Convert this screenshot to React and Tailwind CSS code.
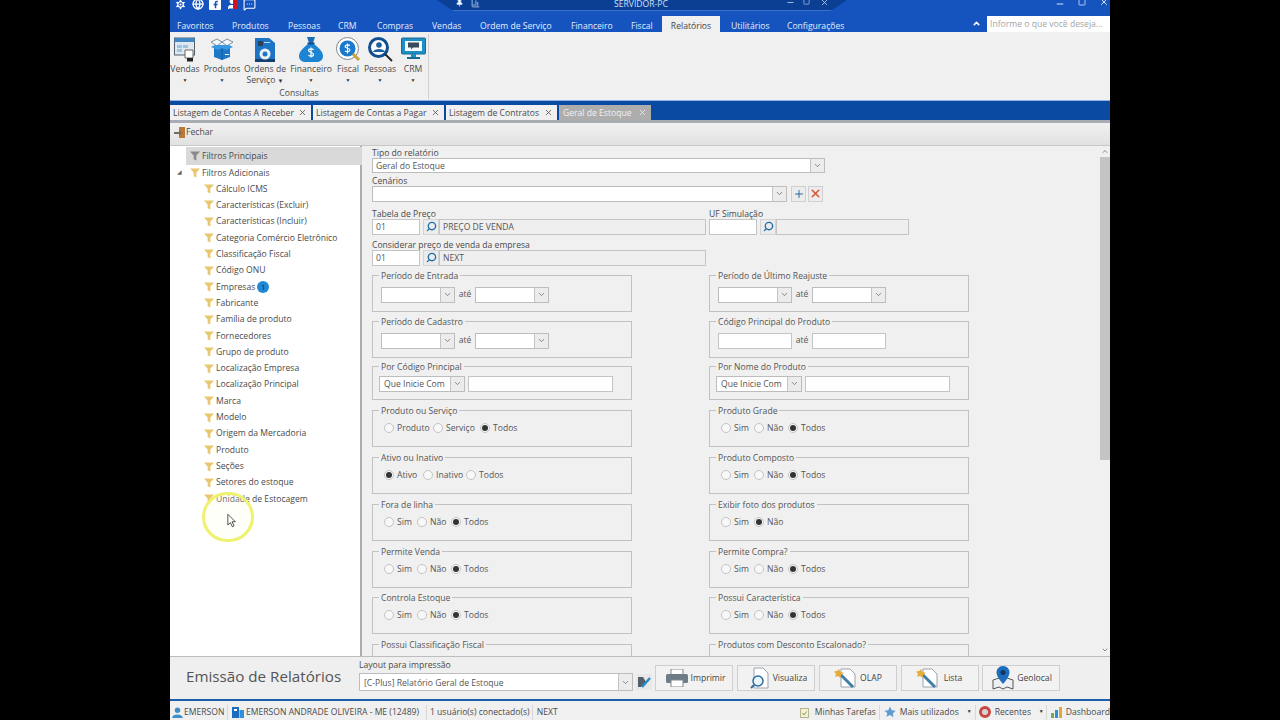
import React from 'react';
import { ChevronDown, ChevronUp, Search, Plus, X, Minus, Square, Settings, Facebook, MessageSquareMore, Pin, BarChart3, Globe, User } from 'lucide-react';

const menu = [
  { label: 'Favoritos', cls: 'w-[55px]' },
  { label: 'Produtos', cls: 'w-[56px]' },
  { label: 'Pessoas', cls: 'w-[50px]' },
  { label: 'CRM', cls: 'w-[39px]' },
  { label: 'Compras', cls: 'w-[55px]' },
  { label: 'Vendas', cls: 'w-[48px]' },
  { label: 'Ordem de Serviço', cls: 'w-[91px]' },
  { label: 'Financeiro', cls: 'w-[60px]' },
  { label: 'Fiscal', cls: 'w-[31px]' },
];

const tree = [
  'Cálculo ICMS', 'Características (Excluir)', 'Características (Incluir)', 'Categoria Comércio Eletrônico',
  'Classificação Fiscal', 'Código ONU', 'Empresas', 'Fabricante', 'Família de produto', 'Fornecedores',
  'Grupo de produto', 'Localização Empresa', 'Localização Principal', 'Marca', 'Modelo',
  'Origem da Mercadoria', 'Produto', 'Seções', 'Setores do estoque', 'Unidade de Estocagem',
];

const openTabs = [
  { label: 'Listagem de Contas A Receber', cls: 'w-[141px]' },
  { label: 'Listagem de Contas a Pagar', cls: 'w-[131px]' },
  { label: 'Listagem de Contratos', cls: 'w-[111px]' },
];

const Funnel = ({ color = '#e8c76f' }) => (
  <svg width="10" height="10" viewBox="0 0 11 11" className="shrink-0">
    <path d="M0 0.5h11L7 5v5.500L4 9V5z" fill={color} />
  </svg>
);

const Chevron = () => (
  <span className="w-[14px] h-full shrink-0 flex items-center justify-center bg-[#ececec] border-l border-[#c4c4c4]">
    <ChevronDown size={9} className="text-[#666]" />
  </span>
);

const Combo = ({ cls, text = '' }) => (
  <div className={`${cls} h-[16px] flex items-center bg-white border border-[#bdbdbd] pl-[4px] justify-between text-[#555]`}>
    <span className="mt-[2px]">{text}</span>
    <Chevron />
  </div>
);

const Box = ({ cls, text = '', muted = false }) => (
  <div className={`${cls} h-[16px] flex items-center border border-[#c4c4c4] pl-[3px] text-[#555] ${muted ? 'bg-[#efefef]' : 'bg-white'}`}>
    <span className="mt-[2px]">{text}</span>
  </div>
);

const SearchBtn = () => (
  <span className="w-[16px] h-[16px] shrink-0 flex items-center justify-center bg-[#ececec] border border-[#d4d4d4]">
    <Search size={11} strokeWidth={3} className="text-[#1f6fa8] -scale-x-100" />
  </span>
);

const Group = ({ label, cls, children }) => (
  <fieldset className={`${cls} border border-[#c2c2c2] pl-[8px] min-w-0`}>
    <legend className="-ml-[2px] px-[2px] h-[12px] leading-[12px] text-[#555]">{label}</legend>
    {children}
  </fieldset>
);

const DateRange = () => (
  <div className="flex items-center pt-[5px]">
    <Combo cls="w-[74px]" />
    <span className="w-[20px] text-center text-[#555]">até</span>
    <Combo cls="w-[74px]" />
  </div>
);

const CodeRange = () => (
  <div className="flex items-center pt-[5px]">
    <Box cls="w-[74px]" />
    <span className="w-[20px] text-center text-[#555]">até</span>
    <Box cls="w-[74px]" />
  </div>
);

const Filter = () => (
  <div className="flex items-center gap-[3px] pt-[3px] -ml-[2px]">
    <Combo cls="w-[86px]" text="Que Inicie Com" />
    <Box cls="w-[145px]" />
  </div>
);

const Radios = ({ items, sel }) => (
  <div className="flex items-center pt-[4px] pl-[3px] h-[18px]">
    {items.map(([label, cls], i) => (
      <div key={label} className={`${cls} flex items-center gap-[3px] text-[#555]`}>
        <span className="w-[10px] h-[10px] rounded-full border border-[#c4c4c4] bg-[#f8f8f8] flex items-center justify-center shrink-0">
          {i === sel && <span className="w-[6px] h-[6px] rounded-full bg-[#333]" />}
        </span>
        <span className="mt-[2px]">{label}</span>
      </div>
    ))}
  </div>
);

const simNaoTodos = [['Sim', 'w-[33px]'], ['Não', 'w-[34px]'], ['Todos', 'w-[40px]']];

const RibbonItem = ({ cls, label, second, children }) => (
  <div className={`${cls} flex flex-col items-center`}>
    <div className="h-[27px] flex items-center justify-center">{children}</div>
    <span className="mt-[1.500px] whitespace-nowrap leading-[11px]">{label}</span>
    {second ? (
      <span className="whitespace-nowrap leading-[11px]">{second} <span className="text-[6px] text-[#333]">▼</span></span>
    ) : (
      <span className="text-[5px] leading-[11px] text-[#333]">▼</span>
    )}
  </div>
);

const ActionBtn = ({ label, cls = '', children }) => (
  <div className={`${cls} w-[78px] h-[26px] flex items-center bg-[#f2f2f2] border border-[#cfcfcf] text-[#444]`}>
    {children}
    <span className="flex-1 text-center">{label}</span>
  </div>
);

const Wand = () => (
  <svg width="24" height="22" viewBox="0 0 24 22" className="ml-[14px] shrink-0">
    <path d="M7 2h9l5 5v13H7z" fill="#fff" stroke="#9aa3ad" />
    <path d="M6 7l13 13" stroke="#3f7fa8" strokeWidth="3" />
    <path d="M5 2l1.500 3L10 6 7 8l-.5 3-2.500-2-3 1 1-3-2-2.500 3-.5z" fill="#e6ad3c" />
  </svg>
);

export default function App() {
  return (
    <div className="w-full h-screen bg-black flex justify-center overflow-hidden font-['Open_Sans',sans-serif] text-[8.6px]">
      <div className="relative w-[940px] h-[720px] flex flex-col bg-[#f0f0f0] text-[#4a4a4a] overflow-hidden">
        {/* Title bar */}
        <div className="h-[16px] bg-[#1553bf] flex items-start text-white relative">
          <div className="w-[96px] flex items-center gap-[5px] pl-[4px] -mt-[3px] h-[14px]">
            <Settings size={13} fill="white" stroke="#1553bf" />
            <Globe size={12} strokeWidth={2.5} />
            <span className="w-[12px] h-[12px] bg-white rounded-[1px] flex items-center justify-center"><Facebook size={9} fill="#1553bf" stroke="none" /></span>
            <span className="relative w-[12px] h-[12px]">
              <User size={12} fill="white" />
              <span className="absolute right-0 top-[2px] w-[5px] h-[9px] bg-[#d0141f]" />
            </span>
            <MessageSquareMore size={13} />
          </div>
          {/* servidor caption */}
          <div className="ml-[171px] w-[410px] h-[11px] bg-[#0b3f94] border-b border-[#3b72c8] [clip-path:polygon(0_0,100%_0,96%_100%,4%_100%)] flex items-start leading-[9px] text-[#cfe0f8]">
            <Pin size={9} fill="white" className="ml-[18px] -mt-[2px]" />
            <BarChart3 size={9} className="ml-[7px] -mt-[1px]" />
            <span className="ml-[134px] w-[53px] whitespace-nowrap">SERVIDOR-PC</span>
            <Minus size={9} className="ml-[119px] -mt-[2px]" />
            <Square size={7} className="ml-[8px] -mt-[2px]" />
            <X size={9} className="ml-[10px] -mt-[2px]" />
          </div>
          <div className="absolute right-[1px] top-0 flex items-start gap-[13px]">
            <Minus size={10} className="-mt-[1px]" />
            <Square size={8} className="-mt-[2px]" />
            <X size={10} className="-mt-[3px]" />
          </div>
        </div>

        {/* Menu */}
        <div className="h-[16px] bg-[#1553bf] flex items-stretch text-[#e3edfb] leading-[20px] pl-[7px]">
          {menu.map((m) => (
            <span key={m.label} className={`${m.cls} whitespace-nowrap`}>{m.label}</span>
          ))}
          <span className="w-[58px] bg-[#f0f0f0] text-[#444] text-center">Relatórios</span>
          <span className="w-[56px] ml-[11px] whitespace-nowrap">Utilitários</span>
          <span className="w-[190px] whitespace-nowrap">Configurações</span>
          <ChevronUp size={9} strokeWidth={4} className="text-white ml-[-5px] mt-[3px]" />
          <div className="ml-[6px] w-[123px] h-[16px] bg-white text-[#a5a5a5] leading-[16px] pl-[3px] whitespace-nowrap overflow-hidden">Informe o que você deseja...</div>
        </div>

        {/* Ribbon */}
        <div className="h-[69px] bg-[#f0f0f0] border-b border-[#8db3e8] flex">
          <div className="w-[259px] border-r border-[#d0d0d0] mt-[2px] mb-[1px] flex flex-col">
            <div className="flex pt-[2px]">
              <RibbonItem cls="w-[30px]" label="Vendas">
                <svg width="22" height="25" viewBox="0 0 22 25">
                  <rect x="0.500" y="1" width="20" height="17" fill="#dfe7ef" stroke="#55606b" />
                  <rect x="0.500" y="1" width="20" height="4" fill="#3f88c5" />
                  <path d="M3 8h5v3H3zM9 8h5v3H9zM3 12h5v3H3z" fill="#9cc3e4" />
                  <path d="M11 13h8v8h-8z" fill="#fff" stroke="#666" />
                  <rect x="13" y="21" width="6" height="3.500" fill="#222" />
                </svg>
              </RibbonItem>
              <RibbonItem cls="w-[44px]" label="Produtos">
                <svg width="24" height="24" viewBox="0 0 24 24">
                  <path d="M4 9h16v11l-8 3-8-3z" fill="#1c78c6" />
                  <path d="M12 12v11" stroke="#0f5a9c" />
                  <path d="M1 5l6-3 5 3-5 4zM23 5l-6-3-5 3 5 4z" fill="#f4f7fa" stroke="#5b7690" strokeWidth=".8" />
                  <path d="M1 10l7 3 4-2 4 2 7-3-4-2H5z" fill="#3a98e0" />
                  <rect x="15" y="17" width="4" height="1" fill="#fff" />
                </svg>
              </RibbonItem>
              <RibbonItem cls="w-[42px]" label="Ordens de" second="Serviço">
                <svg width="20" height="25" viewBox="0 0 20 25">
                  <path d="M0 1h14l6 5v19H0z" fill="#1d74c4" />
                  <rect x="3" y="4" width="5" height="5" fill="#27435f" />
                  <rect x="9" y="5" width="6" height="1" fill="#bcd7ef" />
                  <rect x="0" y="22" width="20" height="3" fill="#15406e" />
                  <circle cx="10" cy="17" r="5.500" fill="#eaf1f7" />
                  <circle cx="10" cy="17" r="2.500" fill="#1d74c4" />
                </svg>
              </RibbonItem>
              <RibbonItem cls="w-[50px]" label="Financeiro">
                <svg width="24" height="25" viewBox="0 0 24 25">
                  <path d="M8 0h8l-2 6h-4z" fill="#1b6cb4" />
                  <path d="M9 7h6c5 4 9 8 9 12 0 4-3 6-7 6H7c-4 0-7-2-7-6 0-4 4-8 9-12z" fill="#1c84d2" />
                  <rect x="8.500" y="5.500" width="7" height="2" fill="#0f4e8a" />
                  <path d="M14.500 13c-1-1.500-5-1.500-5 .5s5 1.500 5 4-4 2-5 .5M12 10.500v10" fill="none" stroke="#fff" strokeWidth="1.200" />
                </svg>
              </RibbonItem>
              <RibbonItem cls="w-[24px]" label="Fiscal">
                <svg width="25" height="25" viewBox="0 0 25 25">
                  <circle cx="11.500" cy="11.500" r="11" fill="#fff" stroke="#7a8590" />
                  <circle cx="11.500" cy="11.500" r="8" fill="#1b78cc" />
                  <path d="M14 8.500c-1-1-5-1-5 1s5 1.500 5 3.500-4 2-5 .8M11.500 6.500v10" fill="none" stroke="#fff" strokeWidth="1.100" />
                  <path d="M17 17l6 6" stroke="#c9a13c" strokeWidth="3" />
                </svg>
              </RibbonItem>
              <RibbonItem cls="w-[40px]" label="Pessoas">
                <svg width="25" height="25" viewBox="0 0 25 25">
                  <circle cx="10.500" cy="10.500" r="9" fill="#fff" stroke="#124f8f" strokeWidth="3" />
                  <circle cx="11" cy="8" r="2.800" fill="#1a5f9e" />
                  <path d="M5 15c1-4 11-4 12 0z" fill="#1a5f9e" />
                  <path d="M17 17l7 7" stroke="#222" strokeWidth="1.800" />
                </svg>
              </RibbonItem>
              <RibbonItem cls="w-[26px]" label="CRM">
                <svg width="25" height="24" viewBox="0 0 25 24">
                  <rect x="0.500" y="1" width="24" height="16" rx="1" fill="#1d8fc4" stroke="#176b95" />
                  <rect x="4" y="4" width="17" height="10" fill="#f4fafd" />
                  <path d="M7 5.500h11v5h-6l-2 2v-2H7z" fill="#3a4c5c" />
                  <path d="M10 17h5v3h-5z" fill="#1d8fc4" />
                  <rect x="6" y="20" width="13" height="2" fill="#176b95" />
                </svg>
              </RibbonItem>
            </div>
            <div className="text-center mt-auto leading-[11px]">Consultas</div>
          </div>
        </div>

        {/* Open tabs */}
        <div className="h-[19px] bg-[#0a4aa3] flex items-end gap-[2px]">
          {openTabs.map((t) => (
            <div key={t.label} className={`${t.cls} h-[15px] bg-[#f0f0f0] flex items-center justify-between pl-[3px] pr-[4px] whitespace-nowrap`}>
              <span className="mt-[2px]">{t.label}</span>
              <X size={9} />
            </div>
          ))}
          <div className="w-[92px] h-[15px] bg-[#adadad] text-[#f2f2f2] flex items-center justify-between pl-[4px] pr-[4px] whitespace-nowrap">
            <span className="mt-[2px]">Geral de Estoque</span>
            <X size={9} />
          </div>
        </div>

        {/* Toolbar */}
        <div className="h-[26px] border-t-[3px] border-[#a9adb3] border-b border-b-[#c8c8c8] bg-gradient-to-b from-[#f1f1f1] to-[#e1e1e1] flex items-center pl-[4px] pb-[2px] gap-0">
          <svg width="12" height="12" viewBox="0 0 12 12">
            <rect x="5" y="0" width="6" height="11" fill="#b8793a" />
            <path d="M0 5h5V3l3 3-3 3V7H0z" fill="#7d6a55" />
          </svg>
          Fechar
        </div>

        {/* Main area */}
        <div className="h-[511px] flex overflow-hidden">
          {/* Tree */}
          <div className="w-[192px] shrink-0 bg-white border-r-2 border-[#adadad] pt-[1px] pl-[3px]">
            <div className="ml-[13px] mr-[-2px] h-[18px] bg-[#d9d9d9] flex items-center gap-[2px] pl-[4px]">
              <Funnel color="#8a8a8a" />
              <span className="mt-[2px]">Filtros Principais</span>
            </div>
            <div className="h-[16px] flex items-center gap-[2px] pl-[17px] relative">
              <span className="absolute left-[4px] top-[3px] text-[6px] text-[#666]">◢</span>
              <Funnel />
              <span className="mt-[1px]">Filtros Adicionais</span>
            </div>
            {tree.map((t) => (
              <div key={t} className="h-[16.34px] flex items-center gap-[2px] pl-[31px]">
                <Funnel />
                <span className="whitespace-nowrap">{t}</span>
                {t === 'Empresas' && (
                  <span className="w-[12px] h-[12px] rounded-full bg-[#1f88d8] text-[#12304d] text-[8px] flex items-center justify-center">1</span>
                )}
              </div>
            ))}
          </div>

          {/* Form */}
          <div className="w-[738px] shrink-0 pl-[10px] overflow-hidden">
            <div className="h-[12px] leading-[14px]">Tipo do relatório</div>
            <div className="w-[453px] h-[15px] flex items-center bg-white border border-[#bdbdbd] pl-[3px] justify-between text-[#555]">
              <span className="mt-[2px]">Geral do Estoque</span>
              <Chevron />
            </div>
            <div className="h-[12px] leading-[14px] mt-[1px]">Cenários</div>
            <div className="flex items-center">
              <Combo cls="w-[415px]" />
              <span className="ml-[4px] w-[15px] h-[16px] bg-[#ececec] border border-[#d0d0d0] flex items-center justify-center">
                <Plus size={12} strokeWidth={2} className="text-[#2b6a9e]" />
              </span>
              <span className="ml-[2px] w-[15px] h-[16px] bg-[#ececec] border border-[#d0d0d0] flex items-center justify-center">
                <X size={13} strokeWidth={3} className="text-[#d5583a]" />
              </span>
            </div>
            <div className="flex mt-[5px] h-[12px] leading-[14px]">
              <span className="w-[337px]">Tabela de Preço</span>
              <span>UF Simulação</span>
            </div>
            <div className="flex items-center">
              <Box cls="w-[48px]" text="01" />
              <span className="w-[3px]" />
              <SearchBtn />
              <Box cls="w-[267px]" text="PREÇO DE VENDA" muted />
              <Box cls="w-[48px] ml-[3px]" />
              <span className="w-[3px]" />
              <SearchBtn />
              <Box cls="w-[133px]" muted />
            </div>
            <div className="h-[12px] leading-[14px] mt-[3px]">Considerar preço de venda da empresa</div>
            <div className="flex items-center">
              <Box cls="w-[48px]" text="01" />
              <span className="w-[3px]" />
              <SearchBtn />
              <Box cls="w-[267px]" text="NEXT" muted />
            </div>

            <div className="grid grid-cols-[260px_260px] gap-x-[77px] mt-[4px]">
              <Group label="Período de Entrada" cls="h-[42px] mb-[4px]"><DateRange /></Group>
              <Group label="Período de Último Reajuste" cls="h-[42px] mb-[4px]"><DateRange /></Group>
              <Group label="Período de Cadastro" cls="h-[42px] mb-[3px]"><DateRange /></Group>
              <Group label="Código Principal do Produto" cls="h-[42px] mb-[3px]"><CodeRange /></Group>
              <Group label="Por Código Principal" cls="h-[39px] mb-[5px]"><Filter /></Group>
              <Group label="Por Nome do Produto" cls="h-[39px] mb-[5px]"><Filter /></Group>
              <Group label="Produto ou Serviço" cls="h-[42px] mb-[5px]">
                <Radios items={[['Produto', 'w-[49px]'], ['Serviço', 'w-[47px]'], ['Todos', 'w-[40px]']]} sel={2} />
              </Group>
              <Group label="Produto Grade" cls="h-[42px] mb-[5px]"><Radios items={simNaoTodos} sel={2} /></Group>
              <Group label="Ativo ou Inativo" cls="h-[42px] mb-[5px]">
                <Radios items={[['Ativo', 'w-[39px]'], ['Inativo', 'w-[43px]'], ['Todos', 'w-[40px]']]} sel={0} />
              </Group>
              <Group label="Produto Composto" cls="h-[42px] mb-[5px]"><Radios items={simNaoTodos} sel={2} /></Group>
              <Group label="Fora de linha" cls="h-[42px] mb-[5px]"><Radios items={simNaoTodos} sel={2} /></Group>
              <Group label="Exibir foto dos produtos" cls="h-[42px] mb-[5px]">
                <Radios items={[['Sim', 'w-[33px]'], ['Não', 'w-[34px]']]} sel={1} />
              </Group>
              <Group label="Permite Venda" cls="h-[42px] mb-[4px]"><Radios items={simNaoTodos} sel={2} /></Group>
              <Group label="Permite Compra?" cls="h-[42px] mb-[4px]"><Radios items={simNaoTodos} sel={2} /></Group>
              <Group label="Controla Estoque" cls="h-[42px] mb-[5px]"><Radios items={simNaoTodos} sel={2} /></Group>
              <Group label="Possui Característica" cls="h-[42px] mb-[5px]"><Radios items={simNaoTodos} sel={2} /></Group>
              <Group label="Possui Classificação Fiscal" cls="h-[42px]" />
              <Group label="Produtos com Desconto Escalonado?" cls="h-[42px]" />
            </div>
          </div>

          {/* Scrollbar */}
          <div className="w-[10px] shrink-0 flex flex-col items-center bg-[#f0f0f0]">
            <ChevronUp size={8} className="text-[#555] h-[11px]" />
            <div className="w-full h-[303px] bg-[#c4c4c4]" />
            <ChevronDown size={8} className="text-[#555] mt-auto mb-[2px]" />
          </div>
        </div>

        {/* Footer */}
        <div className="h-[45px] border-t border-[#bdbdbd] border-b-2 border-b-[#1c5fa8] bg-[#efefef] flex items-start">
          <div className="w-[189px] pl-[16px] pt-[8px] text-[15.2px] leading-[22px] text-[#555] whitespace-nowrap">Emissão de Relatórios</div>
          <div className="w-[296px] shrink-0">
            <div className="h-[12px] leading-[12px] mt-[2px]">Layout para impressão</div>
            <div className="flex items-center mt-[2px]">
              <Combo cls="w-[274px] !h-[18px]" text="[C-Plus] Relatório Geral de Estoque" />
              <svg width="16" height="16" viewBox="0 0 16 16" className="ml-[3px]">
                <rect width="16" height="16" fill="#e8e8e8" />
                <path d="M2 3h5l3 5-5 5H2z" fill="#51606d" />
                <path d="M6 13l8-9" stroke="#2a88c8" strokeWidth="2.500" />
              </svg>
            </div>
          </div>
          <div className="flex gap-[4px] mt-[8px]">
            <ActionBtn label="Imprimir" cls="pr-[4px]">
              <svg width="22" height="18" viewBox="0 0 22 18" className="ml-[10px] shrink-0">
                <rect x="5" y="0" width="12" height="6" fill="#fff" stroke="#7e8890" />
                <rect x="0" y="5" width="22" height="9" rx="1.500" fill="#6f7c88" />
                <rect x="5" y="11" width="12" height="7" fill="#fff" stroke="#7e8890" />
              </svg>
            </ActionBtn>
            <ActionBtn label="Visualiza" cls="pr-[4px]">
              <svg width="20" height="22" viewBox="0 0 20 22" className="ml-[12px] shrink-0">
                <path d="M4 1h9l5 5v15H4z" fill="#fff" stroke="#9aa3ad" />
                <circle cx="8" cy="14" r="5" fill="#eaf4fb" stroke="#2f6d9c" strokeWidth="1.500" />
                <path d="M4 18l-3 3" stroke="#2f6d9c" strokeWidth="2" />
              </svg>
            </ActionBtn>
            <ActionBtn label="OLAP" cls="pr-[12px]"><Wand /></ActionBtn>
            <ActionBtn label="Lista" cls="pr-[12px]"><Wand /></ActionBtn>
            <div className="-ml-[1px]">
              <ActionBtn label="Geolocal" cls="pr-[4px]">
                <svg width="22" height="24" viewBox="0 0 22 24" className="ml-[9px] shrink-0">
                  <path d="M1 14l6-2 4 2 4-2 6 2v9l-6-2-4 2-4-2-6 2z" fill="#eef1f3" stroke="#555" />
                  <path d="M11 0c4 0 6.500 3 6.500 6.500C17.500 11 11 18 11 18S4.500 11 4.500 6.500C4.500 3 7 0 11 0z" fill="#1c6dbd" />
                  <circle cx="11" cy="6.500" r="2.500" fill="#12375e" />
                </svg>
              </ActionBtn>
            </div>
          </div>
        </div>

        {/* Status bar */}
        <div className="h-[19px] bg-[#f0f0f0] flex items-center whitespace-nowrap pt-[3px]">
          <svg width="11" height="11" viewBox="0 0 12 12" className="ml-[2px] shrink-0">
            <circle cx="6" cy="3.500" r="3" fill="#3f8fc9" />
            <path d="M0 12c.5-5 11-5 12 0z" fill="#3f8fc9" />
          </svg>
          <span className="ml-[1px] w-[43px]">EMERSON</span>
          <span className="w-[1px] h-[15px] bg-[#d8d8d8]" />
          <svg width="12" height="12" viewBox="0 0 12 12" className="ml-[4px] shrink-0">
            <rect x="0" y="1" width="7" height="11" fill="#1c6dbd" />
            <rect x="7.500" y="4" width="4.500" height="8" fill="#2f8fd8" />
            <rect x="2" y="3" width="3" height="2" fill="#fff" />
          </svg>
          <span className="ml-[2px] w-[180px]">EMERSON ANDRADE OLIVEIRA - ME (12489)</span>
          <span className="w-[1px] h-[15px] bg-[#d8d8d8]" />
          <span className="ml-[3px] w-[102px]">1 usuário(s) conectado(s)</span>
          <span className="w-[1px] h-[15px] bg-[#d8d8d8]" />
          <span className="ml-[4px] w-[263px]">NEXT</span>
          <svg width="9" height="11" viewBox="0 0 9 11" className="shrink-0">
            <rect x="0.500" y="1.500" width="8" height="9" fill="#f4efd9" stroke="#b8b48a" />
            <path d="M2.500 6l1.500 2 2.500-3.500" fill="none" stroke="#7aa35a" />
          </svg>
          <span className="ml-[6px] w-[64px]">Minhas Tarefas</span>
          <span className="w-[1px] h-[15px] bg-[#d8d8d8]" />
          <svg width="12" height="12" viewBox="0 0 24 24" className="ml-[4px] shrink-0">
            <path d="M12 1l3.400 7.300 7.900 1-5.800 5.500 1.500 7.900L12 18l-7 3.700 1.500-7.900L.7 9.300l7.900-1z" fill="#5f9bd1" />
          </svg>
          <span className="ml-[4px] w-[67px]">Mais utilizados</span>
          <span className="text-[5px] text-[#333] w-[8px]">▼</span>
          <span className="w-[1px] h-[15px] bg-[#d8d8d8]" />
          <span className="ml-[3px] w-[12px] h-[12px] rounded-full border-[3px] border-[#c8473f] bg-[#d5d5d5] shrink-0" />
          <span className="ml-[4px] w-[44px]">Recentes</span>
          <span className="text-[5px] text-[#333] w-[7px]">▼</span>
          <span className="w-[1px] h-[15px] bg-[#d8d8d8]" />
          <svg width="11" height="11" viewBox="0 0 11 11" className="ml-[4px] shrink-0">
            <rect x="0" y="6" width="3" height="5" fill="#6fae4f" />
            <rect x="4" y="3" width="3" height="8" fill="#2f8fd8" />
            <rect x="8" y="0" width="3" height="11" fill="#e0a63a" />
          </svg>
          <span className="ml-[4px]">Dashboard</span>
        </div>

        {/* Mouse highlight */}
        <div className="absolute left-[32px] top-[492px] w-[52px] h-[50px] rounded-full border-[3px] border-[#eef26e] bg-[#fdfde8]/20">
          <svg width="10" height="15" viewBox="0 0 12 17" className="absolute left-[22px] top-[18px]">
            <path d="M1 1v13l3-3 2.500 5 2-1-2.500-5h4z" fill="#fff" stroke="#333" />
          </svg>
        </div>
      </div>
    </div>
  );
}
